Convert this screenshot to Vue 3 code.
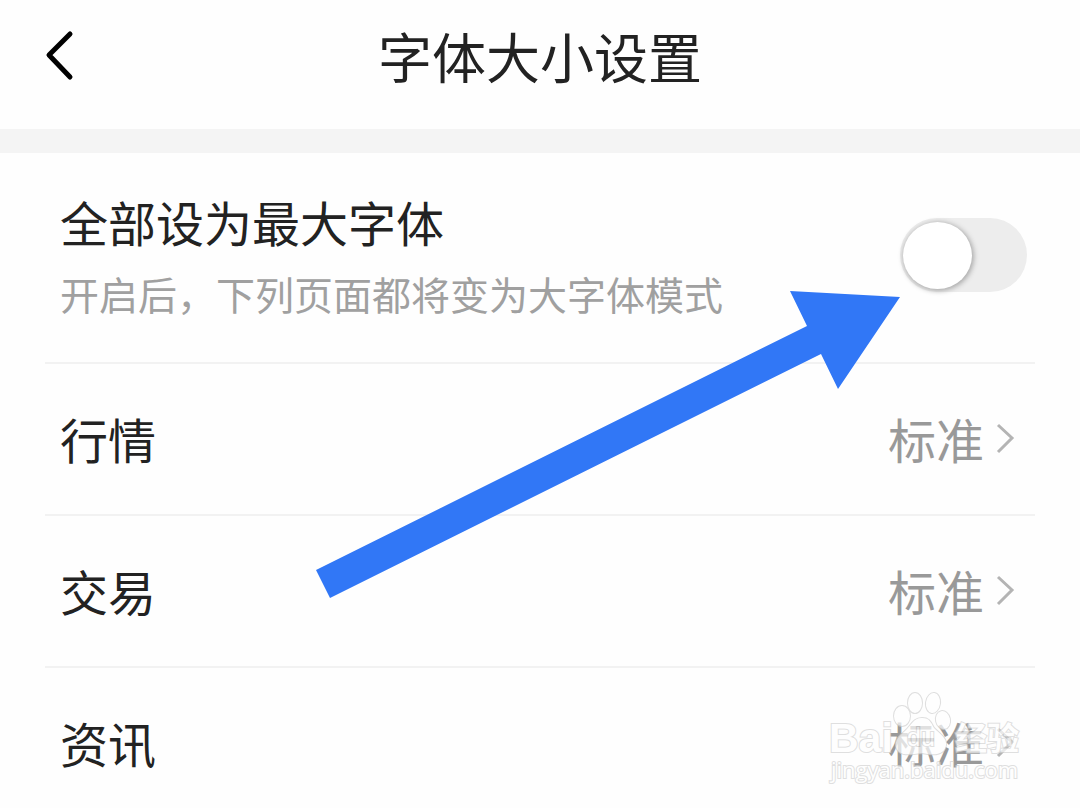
<script setup>
import { ref } from 'vue'

const largest = ref(false)
const rows = [
  { id: 'quotes', name: '行情', value: '标准' },
  { id: 'trade', name: '交易', value: '标准' },
  { id: 'news', name: '资讯', value: '标准' },
]
</script>

<template>
  <div class="page">
    <header class="header">
      <button class="back" type="button" aria-label="返回">
        <svg viewBox="0 0 32 52" width="32" height="52" aria-hidden="true">
          <path d="M26 4 L5 25 L26 47" />
        </svg>
      </button>
      <h1 class="title">字体大小设置</h1>
    </header>

    <main class="settings">
      <div class="row all">
        <label class="texts" for="largest">
          <span class="name">全部设为最大字体</span>
          <span class="hint">开启后，下列页面都将变为大字体模式</span>
        </label>
        <input id="largest" v-model="largest" class="switch" type="checkbox" role="switch" />
      </div>
      <button v-for="row in rows" :key="row.id" class="row item" type="button">
        <span class="name">{{ row.name }}</span>
        <span class="value">{{ row.value }}</span>
        <svg class="chevron" viewBox="0 0 20 32" width="20" height="32" aria-hidden="true">
          <path d="M3 3 L17 16 L3 30" />
        </svg>
      </button>
    </main>

    <svg class="arrow" viewBox="0 0 590 312" width="590" height="312" aria-hidden="true">
      <path d="M474 1 L584 7 L522 99 L505 64 L14 308 L0 280 L491 36 Z" />
    </svg>

    <svg class="watermark" viewBox="0 0 204 100" width="204" height="100" aria-hidden="true">
      <text class="brand" x="5" y="60" font-size="41">Bai</text>
      <g class="paw">
        <ellipse cx="78" cy="24" rx="8" ry="10" />
        <ellipse cx="91" cy="11" rx="7" ry="10" />
        <ellipse cx="109" cy="11" rx="7" ry="10" transform="rotate(8 109 11)" />
        <ellipse cx="119" cy="28" rx="7" ry="9" transform="rotate(-12 119 28)" />
        <path d="M98 26 C89 26 87 34 81 39 C74 45 71 49 72 54 C74 64 83 63 98 61 C112 64 121 62 122 53 C123 46 116 42 110 36 C107 31 106 26 98 26 Z" />
      </g>
      <text class="du" x="83" y="54" font-size="25">du</text>
      <text class="cn" x="131" y="58" font-size="32">经验</text>
      <text class="site" x="7" y="86" font-size="22">jingyan.baidu.com</text>
    </svg>
  </div>
</template>

<style>
body {
  margin: 0;
  background: #fefefe;
}
</style>

<style scoped>
.page {
  position: relative;
  overflow: hidden;
  min-height: 100vh;
  color: #222;
  background: #fefefe;
  font-family: "Noto Sans CJK SC", sans-serif;
}

button {
  margin: 0;
  border: 0;
  background: none;
  color: inherit;
  font: inherit;
  cursor: pointer;
}

svg {
  display: block;
}

.header {
  display: grid;
  grid-template-columns: 80px 1fr 80px;
  align-items: center;
  box-sizing: border-box;
  height: 153px;
  padding-bottom: 18px;
  border-bottom: 24px solid #f4f4f4;
}

.back {
  justify-self: end;
  padding: 0 4px 0 0;
}

.back path {
  fill: none;
  stroke: #000;
  stroke-width: 5;
  stroke-linecap: round;
  stroke-linejoin: round;
}

.title {
  margin: 0;
  font-size: 54px;
  font-weight: 400;
  line-height: 80px;
  text-align: center;
}

.settings {
  margin: 0 45px;
}

.row {
  display: flex;
  align-items: center;
  box-sizing: border-box;
  width: 100%;
  border-bottom: 2px solid #f2f2f2;
}

.all {
  padding: 36px 8px 41px 15px;
}

.texts {
  display: flex;
  flex: 1;
  flex-direction: column;
  gap: 12px;
}

.name {
  font-size: 48px;
  line-height: 64px;
}

.hint {
  color: #a0a0a0;
  font-size: 39px;
  line-height: 56px;
}

.switch {
  appearance: none;
  display: flex;
  align-items: center;
  box-sizing: border-box;
  width: 127px;
  height: 74px;
  margin: 0;
  padding: 0 3px;
  border-radius: 37px;
  background: #ededed;
  cursor: pointer;
}

.switch::before {
  content: "";
  width: 69px;
  height: 67px;
  border-radius: 50%;
  background: #fff;
  box-shadow: 1px 1px 5px 1px #aaa;
}

.switch:checked {
  justify-content: flex-end;
  background: #3078f6;
}

.item {
  padding: 42px 20px 44px 15px;
  text-align: left;
}

.item:last-child {
  padding-bottom: 34px;
  border-bottom: 0;
}

.item .name {
  flex: 1;
}

.value {
  margin-right: 11px;
  color: #999;
  font-size: 48px;
  line-height: 64px;
}

.chevron path {
  fill: none;
  stroke: #b4b4b4;
  stroke-width: 3;
}

.arrow {
  position: absolute;
  top: 290px;
  left: 316px;
  pointer-events: none;
}

.arrow path {
  fill: #3177f6;
}

.watermark {
  position: absolute;
  top: 692px;
  right: 52px;
  opacity: 0.7;
  pointer-events: none;
}

.watermark text,
.paw {
  fill: #fff;
  stroke: #d2d2d2;
  stroke-width: 2;
  paint-order: stroke;
}

.watermark .brand {
  font-family: "Liberation Sans", sans-serif;
  font-weight: 700;
}

.watermark .du {
  font-family: "Liberation Sans", sans-serif;
}

.watermark .cn {
  font-family: "Noto Sans CJK SC", sans-serif;
  font-weight: 700;
}

.watermark .site {
  font-family: "Open Sans", sans-serif;
}
</style>
